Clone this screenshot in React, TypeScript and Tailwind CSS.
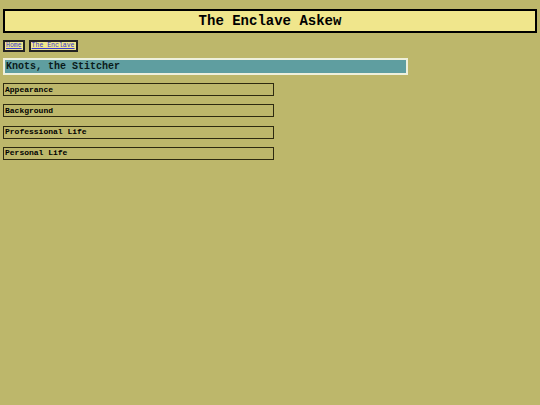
export default function App() {
  const sections = ["Appearance", "Background", "Professional Life", "Personal Life"];

  return (
    <div className="min-h-[405px] bg-[#bdb76b] px-[3px] pt-[9px] font-['Liberation_Mono','Courier_New',monospace] text-black">
      <header className="flex h-[24px] items-center justify-center border-2 border-black bg-[#f0e68c]">
        <h1 className="text-[14px] font-bold leading-none">The Enclave Askew</h1>
      </header>

      <nav className="mt-[7px] flex gap-[4px]">
        {["Home", "The Enclave"].map((label) => (
          <div
            key={label}
            className="flex h-[12px] items-center border-2 border-[#222] bg-[#f0e68c] px-[1px]"
          >
            <a href="#" className="text-[6.5px] font-normal leading-none text-[#3a3ad0] underline">
              {label}
            </a>
          </div>
        ))}
      </nav>

      <div className="mt-[6px] flex h-[17px] w-[405px] items-center border-2 border-[#eef0dc] bg-[#5f9ea0] px-[1px]">
        <h2 className="text-[10px] font-bold leading-none text-[#0a1a1a]">Knots, the Stitcher</h2>
      </div>

      <div className="mt-[8px] flex flex-col gap-[8.3px]">
        {sections.map((s) => (
          <div
            key={s}
            className="flex h-[13px] w-[271px] items-center border-[1.5px] border-[#2e2a10] px-[1px] text-[8px] font-bold leading-none"
          >
            {s}
          </div>
        ))}
      </div>
    </div>
  );
}
